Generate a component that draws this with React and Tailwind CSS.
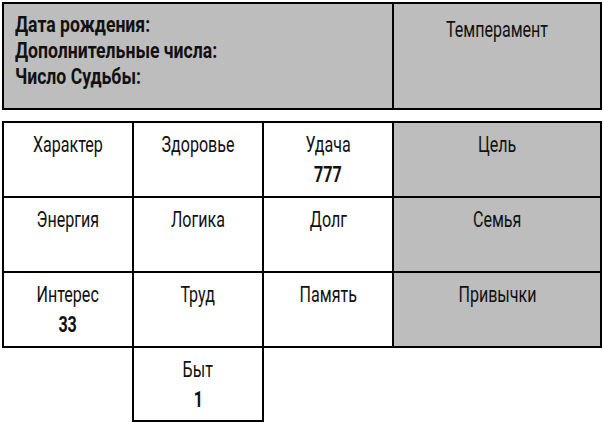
const rows = [
    [{ label: "Характер" }, { label: "Здоровье" }, { label: "Удача", value: "777" }, { label: "Цель", gray: true }],
    [{ label: "Энергия" }, { label: "Логика" }, { label: "Долг" }, { label: "Семья", gray: true }],
    [{ label: "Интерес", value: "33" }, { label: "Труд" }, { label: "Память" }, { label: "Привычки", gray: true }],
]

const Squeeze = ({ children, className = "scale-x-[0.73]" }) => (
    <span className={"inline-block whitespace-nowrap " + className}>{children}</span>
)

const Cell = ({ label, value, gray, first, last }) => (
    <div
        className={
            "h-[75px] border-r-2 border-b-2 border-black pt-[7px] text-center leading-[30px] " +
            (first ? "w-[132px] border-l-2 " : last ? "w-[208px] " : "w-[130px] ") +
            (gray ? "bg-[#bdbdbd]" : "bg-white")
        }
    >
        <div>
            <Squeeze>{label}</Squeeze>
        </div>
        {value && (
            <div className="font-bold">
                <Squeeze>{value}</Squeeze>
            </div>
        )}
    </div>
)

export default function App() {
    return (
        <div className="w-[603px] h-[423px] bg-white pl-[2px] pt-[2px] font-[Roboto,sans-serif] text-[22px] text-[#111] overflow-hidden">
            {/* Шапка */}
            <div className="w-[600px] h-[108px] border-2 border-black bg-[#bdbdbd] flex">
                <div className="flex-1 pl-[11px] pt-[8px] font-bold leading-[26px]">
                    <div><Squeeze className="scale-x-[0.8] origin-left">Дата рождения:</Squeeze></div>
                    <div><Squeeze className="scale-x-[0.8] origin-left">Дополнительные числа:</Squeeze></div>
                    <div><Squeeze className="scale-x-[0.8] origin-left">Число Судьбы:</Squeeze></div>
                </div>
                <div className="w-[208px] border-l-2 border-black pt-[13px] text-center leading-[26px]">
                    <Squeeze>Темперамент</Squeeze>
                </div>
            </div>

            {/* Таблица */}
            <div className="mt-[11px] w-[600px]">
                <div className="h-[2px] bg-black" />
                {rows.map((row, i) => (
                    <div key={i} className="flex">
                        {row.map((cell, j) => (
                            <Cell key={j} {...cell} first={j === 0} last={j === 3} />
                        ))}
                    </div>
                ))}
                <div className="flex">
                    <div className="w-[130px]" />
                    <div className="w-[132px] h-[74px] border-l-2 border-r-2 border-b-2 border-black pt-[7px] text-center leading-[30px]">
                        <div><Squeeze>Быт</Squeeze></div>
                        <div className="font-bold"><Squeeze>1</Squeeze></div>
                    </div>
                </div>
            </div>
        </div>
    )
}
